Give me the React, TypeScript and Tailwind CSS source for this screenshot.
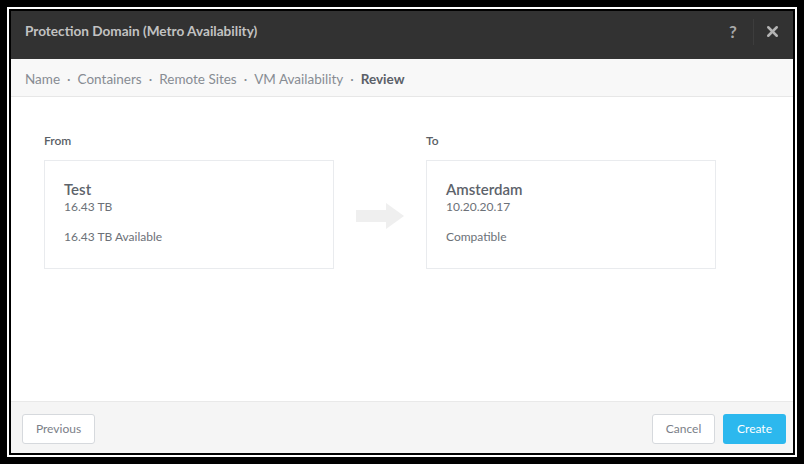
import { X } from 'lucide-react';

const steps = ['Name', 'Containers', 'Remote Sites', 'VM Availability'];

function SiteCard({ label, title, line1, line2 }: { label: string; title: string; line1: string; line2: string }) {
  return (
    <div className="w-[290px]">
      <div className="text-[12px] font-semibold text-[#5b5f66] h-[20px] leading-[20px]">{label}</div>
      <div className="mt-[9px] h-[109px] border border-[#e9ebee] bg-white px-[19px] pt-[18px]">
        <div className="text-[15px] leading-[20px] font-semibold text-[#5d636b]">{title}</div>
        <div className="text-[12px] leading-[16px] text-[#6c7178]">{line1}</div>
        <div className="mt-[14px] text-[12px] leading-[16px] text-[#6c7178]">{line2}</div>
      </div>
    </div>
  );
}

export default function App() {
  return (
    <div className="w-[804px] h-[464px] bg-black p-[7px]" style={{ fontFamily: 'Lato, "Open Sans", sans-serif' }}>
      <div className="h-full border-2 border-white p-[2px] bg-black">
        <div className="h-full flex flex-col bg-white">
          {/* header */}
          <div className="h-[48px] bg-[#323232] flex items-center pl-[14px] pr-[12px] pb-[7px]">
            <div className="flex-1 text-[13.6px] font-bold text-[#c2c2c2]">Protection Domain (Metro Availability)</div>
            <div className="text-[17px] font-bold text-[#a9a9a9] w-[20px] text-center">?</div>
            <div className="mx-[10px] w-px h-[26px] bg-[#3d3d3d]" />
            <X className="w-[17px] h-[17px] text-[#b4b4b4]" strokeWidth={3.5} />
          </div>
          {/* breadcrumb */}
          <div className="h-[38px] bg-[#f8f8f8] border-b border-[#e7e7e7] flex items-center pl-[14px] pt-[3px] text-[13.5px] text-[#878c93]">
            {steps.map((s) => (
              <span key={s} className="flex items-center">
                <span>{s}</span>
                <span className="mx-[7px]">·</span>
              </span>
            ))}
            <span className="font-bold text-[#5b6068]">Review</span>
          </div>
          {/* body */}
          <div className="flex-1 flex items-start pl-[33px] pt-[34px]">
            <SiteCard label="From" title="Test" line1="16.43 TB" line2="16.43 TB Available" />
            <div className="w-[92px] h-[138px] flex items-center justify-center pt-[32px]">
              <svg width="48" height="26" viewBox="0 0 48 26">
                <path d="M0 7 H30 V0 L48 13 L30 26 V19 H0 Z" fill="#efefef" />
              </svg>
            </div>
            <SiteCard label="To" title="Amsterdam" line1="10.20.20.17" line2="Compatible" />
          </div>
          {/* footer */}
          <div className="h-[52px] bg-[#f5f5f5] border-t border-[#e9e9e9] flex items-center pl-[11px] pr-[7px] pt-[3px]">
            <button className="h-[30px] w-[73px] rounded-[3px] border border-[#d6d9dd] bg-white text-[12px] text-[#7b8088]">Previous</button>
            <div className="flex-1" />
            <button className="h-[30px] w-[63px] rounded-[3px] border border-[#d6d9dd] bg-white text-[12px] text-[#7b8088]">Cancel</button>
            <button className="ml-[8px] h-[30px] w-[63px] rounded-[3px] bg-[#2cb8ee] text-[12px] text-white">Create</button>
          </div>
        </div>
      </div>
    </div>
  );
}
